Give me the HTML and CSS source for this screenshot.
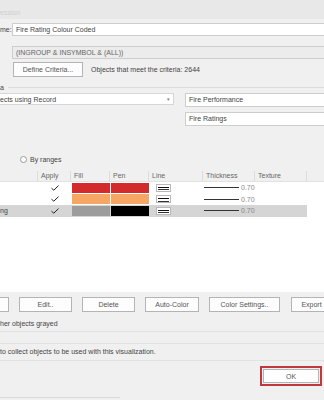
FILE: index.html
```html
<!doctype html>
<html>
    <head>
        <title>Visualization</title>
        <!-- Style -->
        <link rel="stylesheet" href="styles.css">
    </head>
    <body>
        <div class="dialog">
            <div class="titlebar"><span class="title">ession</span></div>

            <!-- Name -->
            <div class="name-row">
                <span class="label">me:</span>
                <div class="field">Fire Rating Colour Coded</div>
            </div>
            <div class="field criteria">(INGROUP &amp; INSYMBOL &amp; (ALL))</div>
            <div class="criteria-row">
                <button class="btn define">Define Criteria...</button>
                <span class="count">Objects that meet the criteria: 2644</span>
            </div>

            <!-- Group -->
            <div class="group-label"><span>a</span><span class="rule"></span></div>
            <div class="record-grid">
                <div class="select">ects using Record<span class="arrow">&#9662;</span></div>
                <div class="field">Fire Performance</div>
                <div></div>
                <div class="field">Fire Ratings</div>
            </div>
            <div class="radio-row">
                <span class="radio"></span>By ranges
            </div>

            <!-- Table -->
            <div class="table">
                <div class="thead">
                    <div class="th"></div>
                    <div class="th">Apply</div>
                    <div class="th">Fill</div>
                    <div class="th">Pen</div>
                    <div class="th">Line</div>
                    <div class="th">Thickness</div>
                    <div class="th">Texture</div>
                    <div class="th last"></div>
                </div>
                <div class="tr">
                    <div class="td"></div>
                    <div class="td check"><svg width="8" height="6" viewBox="0 0 8 6"><path d="M0.5 3.2 L2.8 5.2 L7.5 0.6" fill="none" stroke="#222" stroke-width="1"/></svg></div>
                    <div class="td"><span class="swatch" style="background:#d32b2b"></span></div>
                    <div class="td"><span class="swatch" style="background:#d32b2b"></span></div>
                    <div class="td"><span class="line-icon"></span></div>
                    <div class="td thick"><span class="thick-line"></span>0.70</div>
                    <div class="td"></div>
                    <div class="td"></div>
                </div>
                <div class="tr">
                    <div class="td"></div>
                    <div class="td check"><svg width="8" height="6" viewBox="0 0 8 6"><path d="M0.5 3.2 L2.8 5.2 L7.5 0.6" fill="none" stroke="#222" stroke-width="1"/></svg></div>
                    <div class="td"><span class="swatch" style="background:#f7a765"></span></div>
                    <div class="td"><span class="swatch" style="background:#f7a765"></span></div>
                    <div class="td"><span class="line-icon"></span></div>
                    <div class="td thick"><span class="thick-line"></span>0.70</div>
                    <div class="td"></div>
                    <div class="td"></div>
                </div>
                <div class="tr selected">
                    <div class="td">ng</div>
                    <div class="td check"><svg width="8" height="6" viewBox="0 0 8 6"><path d="M0.5 3.2 L2.8 5.2 L7.5 0.6" fill="none" stroke="#222" stroke-width="1"/></svg></div>
                    <div class="td"><span class="swatch" style="background:#9c9c9c"></span></div>
                    <div class="td"><span class="swatch" style="background:#000"></span></div>
                    <div class="td"><span class="line-icon"></span></div>
                    <div class="td thick"><span class="thick-line"></span>0.70</div>
                    <div class="td"></div>
                    <div class="td blank"></div>
                </div>
            </div>

            <!-- Buttons -->
            <div class="button-row">
                <button class="btn hidden-left"></button>
                <button class="btn w53">Edit..</button>
                <button class="btn w53">Delete</button>
                <button class="btn w54">Auto-Color</button>
                <button class="btn w71">Color Settings..</button>
                <button class="btn export">Export</button>
            </div>
            <div class="note">her objects grayed</div>
            <div class="info">to collect objects to be used with this visualization.</div>

            <div class="footer">
                <span class="ok-frame"><button class="btn ok">OK</button></span>
            </div>
            <div class="bottom-rule"></div>
        </div>
    </body>
</html>
```

FILE: styles.css
```css
* {
    box-sizing: border-box;
}

body {
    margin: 0;
    background-color: #f0f0f0;
    font-family: "Liberation Sans", Arial, sans-serif;
    font-size: 7px;
    color: #444;
    overflow: hidden;
}

.dialog {
    width: 324px;
    height: 400px;
    display: flex;
    flex-direction: column;
}

.titlebar {
    height: 19px;
    background-color: #e8e8e8;
    padding: 9px 0 0 0;
}

.title {
    color: #cfcfcf;
}

.name-row {
    display: flex;
    align-items: center;
    margin-top: 4px;
    height: 13px;
}

.label {
    width: 12px;
}

.field {
    flex: 1;
    height: 13px;
    line-height: 11px;
    background-color: #fff;
    border: 1px solid #cdcdcd;
    border-right: none;
    padding-left: 3px;
    white-space: nowrap;
}

.criteria {
    flex: none;
    margin: 10px 0 0 12px;
    background-color: #ececec;
    color: #666;
}

.criteria-row {
    display: flex;
    align-items: center;
    margin-top: 3px;
    padding-left: 13px;
}

.btn {
    height: 15px;
    padding: 0;
    background-color: #fdfdfd;
    border: 1px solid #b4b4b4;
    font-family: inherit;
    font-size: 7px;
    color: #555;
    flex: none;
}

.define {
    width: 70px;
}

.count {
    margin-left: 8px;
}

.group-label {
    display: flex;
    align-items: center;
    margin-top: 6px;
    height: 8px;
}

.group-label .rule {
    flex: 1;
    margin-left: 4px;
    border-top: 1px solid #dcdcdc;
}

.record-grid {
    display: grid;
    grid-template-columns: 174px 1fr;
    column-gap: 11px;
    row-gap: 5px;
    margin-top: 2px;
}

.record-grid .field {
    height: 14px;
    line-height: 12px;
}

.select {
    height: 12px;
    line-height: 11px;
    background-color: #fff;
    border: 1px solid #d6d6d6;
    border-left: none;
    display: flex;
    justify-content: space-between;
    padding-right: 3px;
}

.arrow {
    font-size: 5px;
    color: #777;
}

.radio-row {
    display: flex;
    align-items: center;
    margin: 28px 0 0 20px;
    height: 10px;
}

.radio {
    width: 7px;
    height: 7px;
    border: 1px solid #999;
    border-radius: 50%;
    background-color: #fff;
    margin-right: 3px;
}

.table {
    margin-top: 7px;
    height: 121px;
    background-color: #fff;
}

.thead,
.tr {
    display: grid;
    grid-template-columns: 38px 33px 39px 39px 54px 52px 52px 1fr;
}

.thead {
    height: 11px;
    background-color: #f0f0f0;
    border-bottom: 1px solid #e2e2e2;
}

.th {
    border-right: 1px solid #dcdcdc;
    padding-left: 3px;
    line-height: 10px;
    color: #666;
}

.th.last {
    border-right: none;
}

.tr {
    height: 11.5px;
}

.td {
    display: flex;
    align-items: center;
    white-space: nowrap;
}

.selected .td {
    background-color: #d5d5d5;
}

.selected .td.blank {
    background-color: #fff;
}

.check {
    justify-content: center;
}

.swatch {
    width: 38px;
    height: 10px;
    margin-left: 1px;
}

.line-icon {
    width: 15px;
    height: 8px;
    margin-left: 7px;
    background-color: #fff;
    border: 1px solid #b8b8b8;
    position: relative;
}

.line-icon::before {
    content: "";
    position: absolute;
    left: 1px;
    right: 1px;
    top: 2px;
    border-top: 1.5px solid #111;
}

.line-icon::after {
    content: "";
    position: absolute;
    left: 1px;
    right: 1px;
    top: 4.5px;
    border-top: 1px solid #333;
}

.thick {
    color: #888;
}

.thick-line {
    width: 35px;
    margin-left: 1px;
    margin-right: 2px;
    border-top: 1.5px solid #333;
}

.button-row {
    display: flex;
    gap: 10px;
    margin-top: 5px;
    height: 15px;
}

.hidden-left {
    width: 52px;
    margin-left: -43px;
}

.w53 { width: 53px; }
.w54 { width: 54px; }
.w71 { width: 71px; margin-right: 1px; }

.export {
    width: 41px;
}

.note {
    margin-top: 7px;
    height: 13px;
    line-height: 9px;
    border-bottom: 1px solid #e2e2e2;
}

.info {
    margin-top: 11px;
    height: 18px;
    line-height: 16px;
    border-top: 1px solid #e2e2e2;
    border-bottom: 1px solid #e2e2e2;
}

.footer {
    display: flex;
    justify-content: flex-end;
    padding-right: 2px;
    margin-top: 5px;
}

.ok-frame {
    border: 2px solid #c0393b;
    padding: 1px;
    display: flex;
}

.ok {
    width: 56px;
    height: 14px;
    background-color: #fff;
}

.bottom-rule {
    margin-top: 11px;
    border-top: 1px solid #d8d8d8;
    width: 120px;
}
```
